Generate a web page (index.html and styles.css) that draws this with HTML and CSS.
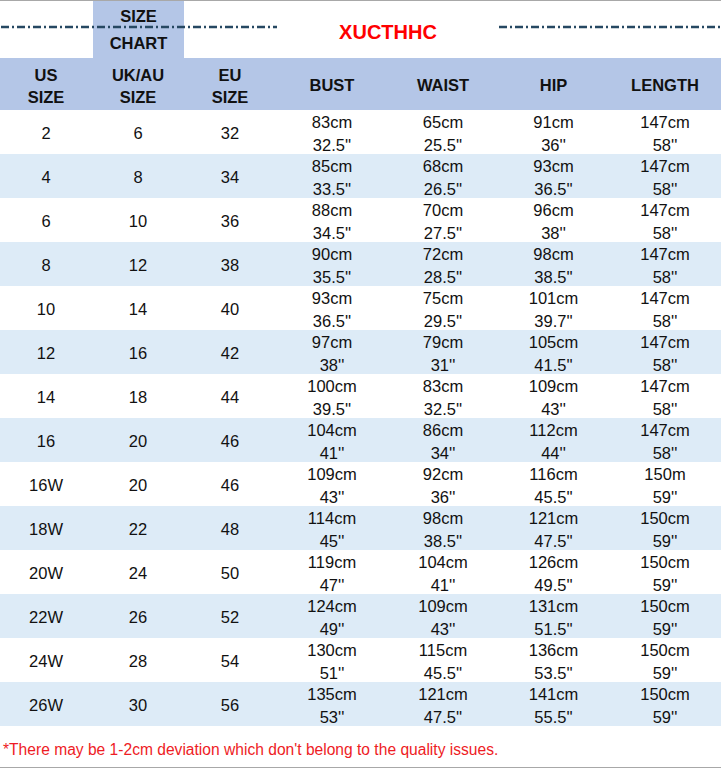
FILE: index.html
```html
<!DOCTYPE html>
<html>
<head>
<meta charset="utf-8">
<link rel="stylesheet" href="styles.css">
</head>
<body>
<div class="sheet">
  <div class="band">
    <div class="bcell"></div>
    <div class="bcell chart"><span>SIZE</span><span>CHART</span></div>
    <div class="bcell"></div>
    <div class="bcell brand">XUCTHHC</div>
    <div class="bcell"></div>
    <div class="bcell"></div>
    <svg class="dash dash-left" width="277" height="4" viewBox="0 0 277 4"><line x1="1" y1="2" x2="277" y2="2"/></svg>
    <svg class="dash dash-right" width="222" height="4" viewBox="0 0 222 4"><line x1="0" y1="2" x2="222" y2="2"/></svg>
  </div>
  <div class="row head">
    <div class="c">US<br>SIZE</div>
    <div class="c">UK/AU<br>SIZE</div>
    <div class="c">EU<br>SIZE</div>
    <div class="c single">BUST</div>
    <div class="c single">WAIST</div>
    <div class="c single">HIP</div>
    <div class="c single">LENGTH</div>
  </div>
  <div class="row"><div class="c">2</div><div class="c">6</div><div class="c">32</div><div class="c">83cm<br>32.5''</div><div class="c">65cm<br>25.5''</div><div class="c">91cm<br>36''</div><div class="c">147cm<br>58''</div></div>
  <div class="row alt"><div class="c">4</div><div class="c">8</div><div class="c">34</div><div class="c">85cm<br>33.5''</div><div class="c">68cm<br>26.5''</div><div class="c">93cm<br>36.5''</div><div class="c">147cm<br>58''</div></div>
  <div class="row"><div class="c">6</div><div class="c">10</div><div class="c">36</div><div class="c">88cm<br>34.5''</div><div class="c">70cm<br>27.5''</div><div class="c">96cm<br>38''</div><div class="c">147cm<br>58''</div></div>
  <div class="row alt"><div class="c">8</div><div class="c">12</div><div class="c">38</div><div class="c">90cm<br>35.5''</div><div class="c">72cm<br>28.5''</div><div class="c">98cm<br>38.5''</div><div class="c">147cm<br>58''</div></div>
  <div class="row"><div class="c">10</div><div class="c">14</div><div class="c">40</div><div class="c">93cm<br>36.5''</div><div class="c">75cm<br>29.5''</div><div class="c">101cm<br>39.7''</div><div class="c">147cm<br>58''</div></div>
  <div class="row alt"><div class="c">12</div><div class="c">16</div><div class="c">42</div><div class="c">97cm<br>38''</div><div class="c">79cm<br>31''</div><div class="c">105cm<br>41.5''</div><div class="c">147cm<br>58''</div></div>
  <div class="row"><div class="c">14</div><div class="c">18</div><div class="c">44</div><div class="c">100cm<br>39.5''</div><div class="c">83cm<br>32.5''</div><div class="c">109cm<br>43''</div><div class="c">147cm<br>58''</div></div>
  <div class="row alt"><div class="c">16</div><div class="c">20</div><div class="c">46</div><div class="c">104cm<br>41''</div><div class="c">86cm<br>34''</div><div class="c">112cm<br>44''</div><div class="c">147cm<br>58''</div></div>
  <div class="row"><div class="c">16W</div><div class="c">20</div><div class="c">46</div><div class="c">109cm<br>43''</div><div class="c">92cm<br>36''</div><div class="c">116cm<br>45.5''</div><div class="c">150m<br>59''</div></div>
  <div class="row alt"><div class="c">18W</div><div class="c">22</div><div class="c">48</div><div class="c">114cm<br>45''</div><div class="c">98cm<br>38.5''</div><div class="c">121cm<br>47.5''</div><div class="c">150cm<br>59''</div></div>
  <div class="row"><div class="c">20W</div><div class="c">24</div><div class="c">50</div><div class="c">119cm<br>47''</div><div class="c">104cm<br>41''</div><div class="c">126cm<br>49.5''</div><div class="c">150cm<br>59''</div></div>
  <div class="row alt"><div class="c">22W</div><div class="c">26</div><div class="c">52</div><div class="c">124cm<br>49''</div><div class="c">109cm<br>43''</div><div class="c">131cm<br>51.5''</div><div class="c">150cm<br>59''</div></div>
  <div class="row"><div class="c">24W</div><div class="c">28</div><div class="c">54</div><div class="c">130cm<br>51''</div><div class="c">115cm<br>45.5''</div><div class="c">136cm<br>53.5''</div><div class="c">150cm<br>59''</div></div>
  <div class="row alt"><div class="c">26W</div><div class="c">30</div><div class="c">56</div><div class="c">135cm<br>53''</div><div class="c">121cm<br>47.5''</div><div class="c">141cm<br>55.5''</div><div class="c">150cm<br>59''</div></div>
  <div class="note">*There may be 1-2cm deviation which don't belong to the quality issues.</div>
</div>
</body>
</html>
```
FILE: styles.css
```css
* { box-sizing: border-box; }
html, body { margin: 0; padding: 0; background: #ffffff; }
body { width: 721px; height: 769px; overflow: hidden; font-family: "Liberation Sans", Arial, sans-serif; color: #111; }
.sheet { width: 721px; }

.band {
  position: relative;
  height: 58px;
  border-top: 1px solid #a8a8a8;
  display: grid;
  grid-template-columns: 92px 92px 92px 222px 111px 112px;
}
.bcell { height: 57px; }
.chart {
  background: #b4c6e7;
  margin-left: 1px;
  display: flex;
  flex-direction: column;
  align-items: center;
  padding-top: 2px;
  font-weight: bold;
  font-size: 16.5px;
  line-height: 27px;
  color: #111;
}
.brand {
  display: flex;
  align-items: center;
  justify-content: center;
  padding-top: 5px;
  padding-left: 2px;
  color: #f00;
  font-weight: bold;
  font-size: 20px;
}
.dash { position: absolute; top: 24px; }
.dash line { stroke: #264862; stroke-width: 2.4; stroke-dasharray: 8 3 2 3; }
.dash-left { left: 0; }
.dash-right { left: 499px; }

.row {
  display: grid;
  grid-template-columns: 92px 92px 92px 112px 110px 111px 112px;
  height: 44px;
  background: #ffffff;
}
.row.alt { background: #ddebf7; }
.c {
  display: flex;
  align-items: center;
  justify-content: center;
  text-align: center;
  font-size: 16.5px;
  line-height: 22.5px;
  color: #111;
  padding-top: 1px;
}
.row.head {
  height: 52px;
  background: #b4c6e7;
}
.head .c {
  font-weight: bold;
  font-size: 16.5px;
  line-height: 22px;
  padding-top: 4px;
}
.head .c.single { padding-top: 2px; }

.note {
  height: 42px;
  border-bottom: 1px solid #a8a8a8;
  color: #ee1c25;
  font-size: 15.6px;
  padding-left: 3px;
  padding-top: 15px;
  line-height: 18px;
  white-space: nowrap;
}
```
